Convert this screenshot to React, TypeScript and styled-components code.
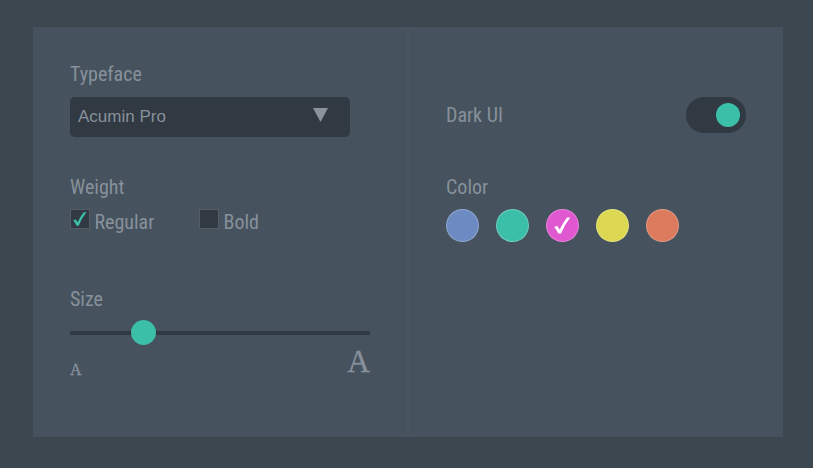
import React from "react";
import styled, { createGlobalStyle } from "styled-components";

const Global = createGlobalStyle`
  * { box-sizing: border-box; }
  body { margin: 0; background: #3d4750; }
`;
const Page = styled.main`
  height: 468px;
  padding: 27px 30px 31px 33px;
  background: #3d4750;
  color: #87919b;
  font-family: "Roboto Condensed", Roboto, sans-serif;
  font-size: 20px;
`;
const Panel = styled.div`
  display: grid;
  grid-template-columns: 376px 374px;
  height: 410px;
  background: #46525d;
`;
const Column = styled.section<{ $divided?: boolean }>`
  padding: 35px 37px 0;
  border-right: ${(p) => (p.$divided ? "2px solid #4a5660" : "none")};
`;
const Label = styled.div<{ $w: number }>`
  width: ${(p) => p.$w}px;
  height: 24px;
  line-height: 24px;
  white-space: nowrap;
`;
const Condensed = styled.span`
  display: inline-block;
  font-stretch: condensed;
  white-space: nowrap;
`;
const Select = styled.div`
  display: flex;
  justify-content: space-between;
  align-items: center;
  width: 280px;
  height: 40px;
  margin-top: 11px;
  padding: 0 22px 0 8px;
  border-radius: 5px;
  background: #313942;
  font: 17px "Liberation Sans", Arial, sans-serif;
`;
const Arrow = styled.svg`
  display: block;
  margin-top: -4px;
`;
const Weight = styled.div`
  margin-top: 38px;
`;
const Options = styled.div`
  display: grid;
  grid-template-columns: 129px 100px;
  margin-top: 10px;
`;
const Option = styled.div`
  display: flex;
  gap: 4.5px;
`;
const OptionText = styled(Label)`
  margin-top: 1px;
`;
const Box = styled.div`
  display: grid;
  place-items: center;
  width: 20px;
  height: 20px;
  border: 1px solid #565c64;
  background: #313942;
`;
const Size = styled.div`
  width: 300px;
  margin-top: 53px;
`;
const Slider = styled.div`
  display: flex;
  align-items: center;
  height: 25px;
  margin-top: 9px;
  padding-left: 61px;
  background: linear-gradient(#313942, #313942) 2px 11px / 296px 4px no-repeat,
    radial-gradient(circle at 2px 13px, #313942 2px, transparent 2.3px),
    radial-gradient(circle at 298px 13px, #313942 2px, transparent 2.3px);
`;
const Knob = styled.div<{ $size: number }>`
  width: ${(p) => p.$size}px;
  height: ${(p) => p.$size}px;
  border-radius: 50%;
  background: #3cbfa8;
`;
const Scale = styled.div`
  display: flex;
  justify-content: space-between;
  align-items: flex-start;
  font-family: "Liberation Serif", serif;
`;
const Glyph = styled.span<{ $size: number; $top: number }>`
  margin-top: ${(p) => p.$top}px;
  font-size: ${(p) => p.$size}px;
  line-height: 36px;
  -webkit-text-stroke: 0.35px #87919b;
`;
const ToggleRow = styled.div`
  display: flex;
  justify-content: space-between;
  align-items: center;
  height: 36px;
  margin-top: 35px;
`;
const Toggle = styled.div`
  display: flex;
  justify-content: flex-end;
  align-items: center;
  width: 60px;
  height: 36px;
  padding-right: 6px;
  border-radius: 18px;
  background: #313942;
`;
const ColorGroup = styled.div`
  margin-top: 42px;
`;
const Swatches = styled.div`
  display: flex;
  gap: 17px;
  margin-top: 10px;
`;
const Swatch = styled.div<{ $color: string }>`
  display: grid;
  place-items: center;
  width: 33px;
  height: 33px;
  border: 1px solid rgba(255, 255, 255, 0.25);
  border-radius: 50%;
  background: ${(p) => p.$color};
`;
const CheckIcon = styled.svg`
  display: block;
`;

const colors = ["#6c8bc2", "#3cbfa8", "#df58d0", "#dcd851", "#dc7a5d"];

function Check({ size, color }: { size: number; color: string }) {
  return (
    <CheckIcon width={size} height={size} viewBox="0 0 18 18">
      <path
        d="M.3 10.8 L3.2 9.2 L6 13.2 Q9.3 6 13.8 .4 H17.2 Q11.2 8 7.4 17.6 H4.6 Q3.2 14 .3 10.8Z"
        fill={color}
      />
    </CheckIcon>
  );
}
function Caption({ text, width }: { text: string; width: number }) {
  return <Label $w={width}><Condensed>{text}</Condensed></Label>;
}

export default function App() {
  return (
    <>
      <Global />
      <Page>
        <Panel>
          <Column $divided>
            <Caption text="Typeface" width={72} />
            <Select>
              Acumin Pro
              <Arrow width="15" height="14"><path d="M0 0H15L7.5 14Z" fill="#8a929d" /></Arrow>
            </Select>
            <Weight>
              <Caption text="Weight" width={54} />
              <Options>
                <Option>
                  <Box><Check size={14} color="#3cbfa8" /></Box>
                  <OptionText $w={60}><Condensed>Regular</Condensed></OptionText>
                </Option>
                <Option>
                  <Box />
                  <OptionText $w={35}><Condensed>Bold</Condensed></OptionText>
                </Option>
              </Options>
            </Weight>
            <Size>
              <Caption text="Size" width={33} />
              <Slider><Knob $size={25} /></Slider>
              <Scale>
                <Glyph $size={16} $top={7}>A</Glyph>
                <Glyph $size={31.5} $top={-1}>A</Glyph>
              </Scale>
            </Size>
          </Column>
          <Column>
            <ToggleRow>
              <Caption text="Dark UI" width={57} />
              <Toggle><Knob $size={24} /></Toggle>
            </ToggleRow>
            <ColorGroup>
              <Caption text="Color" width={42} />
              <Swatches>
                {colors.map((c, i) => (
                  <Swatch key={c} $color={c}>{i === 2 && <Check size={17} color="#fff" />}</Swatch>
                ))}
              </Swatches>
            </ColorGroup>
          </Column>
        </Panel>
      </Page>
    </>
  );
}
